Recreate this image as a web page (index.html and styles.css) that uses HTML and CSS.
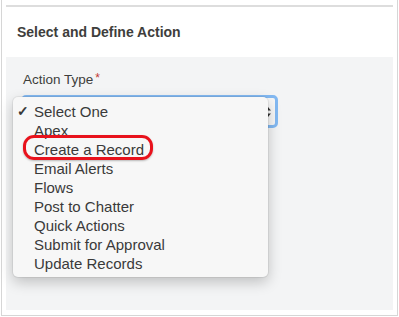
FILE: index.html
```html
<!DOCTYPE html>
<html>
<head>
<meta charset="utf-8">
<link rel="stylesheet" href="styles.css">
</head>
<body>
<div class="frame">
  <div class="card">
    <div class="card-header">Select and Define Action</div>
    <div class="card-body">
      <div class="field-label">Action Type<span class="req">*</span></div>
      <div class="select">
        <svg class="arrows" width="8" height="14" viewBox="0 0 8 14"><path d="M1 5.5 L4 2 L7 5.5 Z M1 8.5 L4 12 L7 8.5 Z" fill="#333"/></svg>
      </div>
      <div class="menu">
        <div class="item selected"><span class="check">✓</span>Select One</div>
        <div class="item">Apex</div>
        <div class="item">Create a Record</div>
        <div class="item">Email Alerts</div>
        <div class="item">Flows</div>
        <div class="item">Post to Chatter</div>
        <div class="item">Quick Actions</div>
        <div class="item">Submit for Approval</div>
        <div class="item">Update Records</div>
        <div class="highlight"></div>
      </div>
    </div>
  </div>
</div>
</body>
</html>
```

FILE: styles.css
```css
html, body {
  margin: 0;
  padding: 0;
  background: #ffffff;
}
.frame {
  margin-left: 1px;
  width: 387px;
  height: 305px;
  padding: 5px 4px 5px 4px;
  border-left: 1px solid #d6d6d6;
  border-right: 1px solid #d6d6d6;
  border-bottom: 1px solid #d6d6d6;
}
.card {
  border-top: 2px solid #dddddd;
  height: 303px;
  display: flex;
  flex-direction: column;
}
.card-header {
  height: 50px;
  box-sizing: border-box;
  padding: 17px 0 0 11px;
  font-family: "Liberation Sans", Arial, sans-serif;
  font-weight: bold;
  font-size: 14px;
  color: #3e3e3c;
}
.card-body {
  flex: 1;
  background: #f3f4f5;
  position: relative;
  padding: 14px 0 0 15px;
}
.field-label {
  font-family: "Liberation Sans", Arial, sans-serif;
  font-size: 13.5px;
  color: #3e3e3c;
  height: 24px;
  padding-left: 2px;
}
.req {
  color: #c23934;
  margin-left: 2px;
  font-size: 12px;
  vertical-align: 2px;
}
.select {
  width: 251px;
  height: 27px;
  border: 3px solid #83b9f2;
  border-radius: 5px;
  background: #f7f7f7;
  position: relative;
}
.arrows {
  position: absolute;
  right: 3px;
  top: 7px;
}
.menu {
  position: absolute;
  left: 7px;
  top: 40px;
  width: 255px;
  height: 180px;
  box-sizing: border-box;
  padding-top: 5px;
  background: #f7f7f7;
  border-radius: 5px;
  box-shadow: 0 0 0 1px rgba(0,0,0,0.06), 0 5px 14px rgba(0,0,0,0.22);
  font-family: "Liberation Sans", Arial, sans-serif;
  font-size: 15px;
  color: #3a3a3a;
}
.item {
  height: 19px;
  line-height: 19px;
  padding-left: 21px;
  position: relative;
  white-space: nowrap;
}
.check {
  position: absolute;
  left: 4px;
  top: 0;
  font-size: 14px;
  font-weight: bold;
}
.highlight {
  position: absolute;
  left: 10px;
  top: 38px;
  width: 124px;
  height: 19px;
  border: 3px solid #e8121c;
  border-radius: 11px;
  box-shadow: 0 1px 2px rgba(0,0,0,0.25);
}
```
